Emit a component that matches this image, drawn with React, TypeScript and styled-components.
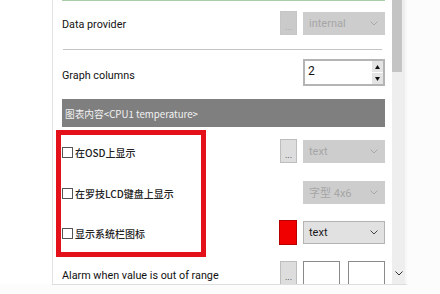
import React from "react";
import styled, { createGlobalStyle } from "styled-components";

const Global = createGlobalStyle`
  html, body { margin: 0; padding: 0; background: #ffffff; }
  body { font-family: "Roboto", "Noto Sans CJK SC", sans-serif; color: #1b1b1b; }
`;

const Page = styled.div`
  display: flex;
  width: 440px;
  height: 294px;
  background: #fcfcfc;
  align-items: flex-start;
`;

const Gutter = styled.div`
  width: 52px;
  height: 284px;
  background: #ffffff;
`;

const Window = styled.div`
  display: flex;
  height: 284px;
  border-bottom: 1px solid #dedede;
  background: #ffffff;
`;

const Panel = styled.div`
  position: relative;
  width: 323px;
  height: 284px;
  overflow: hidden;
  border-left: 1px solid #e2e2e2;
  padding: 0 7px 0 9px;
  display: flex;
  flex-direction: column;
`;

const TopBox = styled.div`
  height: 3px;
  border: 1px solid #a9cda9;
  border-top: none;
  background: #f3f6f3;
`;

const Row = styled.div<{ $mt: number; $h?: number }>`
  display: flex;
  align-items: center;
  margin-top: ${(p) => p.$mt}px;
  height: ${(p) => p.$h ?? 24}px;
  flex-shrink: 0;
`;

const Label = styled.div<{ $pt?: number }>`
  flex: 1;
  font-family: "Roboto", sans-serif;
  font-size: 10.8px;
  color: #111;
  padding-top: ${(p) => p.$pt ?? 2}px;
`;

const CheckLabel = styled.label`
  flex: 1;
  display: flex;
  align-items: center;
  font-family: "Noto Sans CJK SC", sans-serif;
  font-size: 10px;
  font-weight: 500;
  color: #222;
  padding-top: 3px;
`;

const Box = styled.span`
  width: 9px;
  height: 9px;
  border: 1px solid #555;
  background: #fff;
  margin-right: 2px;
`;

const Dots = styled.div<{ $disabled?: boolean }>`
  width: 15px;
  height: 22px;
  margin-right: 6px;
  border: 1px solid ${(p) => (p.$disabled ? "#c6c6c6" : "#bdbdbd")};
  background: ${(p) => (p.$disabled ? "#cacaca" : "#dddddd")};
  color: ${(p) => (p.$disabled ? "#a4a4a4" : "#333")};
  font-size: 9px;
  display: flex;
  align-items: flex-end;
  justify-content: center;
  line-height: 14px;
  box-sizing: content-box;
`;

const Swatch = styled.div`
  width: 16px;
  height: 23px;
  margin-right: 6px;
  background: #f10000;
  border: 1px solid #b40000;
`;

const Select = styled.div<{ $disabled?: boolean }>`
  width: 82px;
  height: 23px;
  box-sizing: border-box;
  display: flex;
  align-items: center;
  justify-content: space-between;
  padding: 0 6px 0 5px;
  background: ${(p) => (p.$disabled ? "#cdcdcd" : "#e1e1e1")};
  border: 1px solid ${(p) => (p.$disabled ? "#cdcdcd" : "#b3b3b3")};
  color: ${(p) => (p.$disabled ? "#a6a6a6" : "#1a1a1a")};
  font-family: "Roboto", "Noto Sans CJK SC", sans-serif;
  font-size: 11px;
`;

const Spin = styled.div`
  width: 82px;
  height: 27px;
  box-sizing: border-box;
  display: flex;
  border: 2px solid #b4b4b4;
  background: #fff;
`;

const SpinValue = styled.div`
  flex: 1;
  font-size: 12px;
  padding: 3px 0 0 3px;
  color: #111;
`;

const SpinButtons = styled.div`
  width: 11px;
  display: flex;
  flex-direction: column;
  gap: 1px;
  background: #fff;
`;

const SpinBtn = styled.div`
  flex: 1;
  background: #e4e4e4;
  display: flex;
  align-items: center;
  justify-content: center;
`;

const Separator = styled.div<{ $mt: number }>`
  margin: ${(p) => p.$mt}px 3px 0 1px;
  height: 1px;
  background: #c4c4c4;
  flex-shrink: 0;
`;

const SectionHeader = styled.div<{ $mt: number }>`
  margin-top: ${(p) => p.$mt}px;
  height: 28px;
  flex-shrink: 0;
  background: #7f7f7f;
  color: #f2f2f2;
  font-family: "Noto Sans CJK SC", sans-serif;
  font-size: 9.7px;
  display: flex;
  align-items: center;
  padding-left: 3px;
  padding-top: 2px;
  box-sizing: border-box;
`;

const Field = styled.div`
  width: 37px;
  height: 24px;
  box-sizing: border-box;
  border: 1px solid #8a8a8a;
  background: #fff;
`;

const FieldPair = styled.div`
  display: flex;
  gap: 8px;
  align-self: flex-start;
`;

const RedFrame = styled.div`
  position: absolute;
  left: 3px;
  top: 130px;
  width: 140px;
  height: 117px;
  border: 5px solid #e4101a;
`;

const Scrollbar = styled.div`
  width: 13px;
  height: 284px;
  background: #eeeeee;
  border-right: 2px solid #f7f7f7;
  display: flex;
  flex-direction: column;
  justify-content: space-between;
`;

const Thumb = styled.div`
  width: 10px;
  height: 72px;
  background: #c4c4c4;
`;

const ArrowDown = styled.div`
  height: 13px;
  display: flex;
  justify-content: center;
  align-items: flex-start;
  padding-left: 1px;
`;

const Chevron = ({ color }: { color: string }) => (
  <svg width="8" height="5" viewBox="0 0 8 5">
    <polyline points="0.5,0.5 4,4 7.5,0.5" fill="none" stroke={color} strokeWidth="1" />
  </svg>
);

const Tri = ({ up }: { up?: boolean }) => (
  <svg width="5" height="4" viewBox="0 0 5 4">
    <polygon points={up ? "2.5,0 5,4 0,4" : "0,0 5,0 2.5,4"} fill="#111" />
  </svg>
);

export default function App() {
  return (
    <>
      <Global />
      <Page>
        <Gutter />
        <Window>
          <Panel>
            <TopBox />
            <Row $mt={10}>
              <Label>Data provider</Label>
              <Dots $disabled>...</Dots>
              <Select $disabled>
                internal
                <Chevron color="#a8a8a8" />
              </Select>
            </Row>
            <Separator $mt={14} />
            <Row $mt={9} $h={27}>
              <Label $pt={5}>Graph columns</Label>
              <Spin>
                <SpinValue>2</SpinValue>
                <SpinButtons>
                  <SpinBtn>
                    <Tri up />
                  </SpinBtn>
                  <SpinBtn>
                    <Tri />
                  </SpinBtn>
                </SpinButtons>
              </Spin>
            </Row>
            <SectionHeader $mt={13}>图表内容&lt;CPU1 temperature&gt;</SectionHeader>
            <Row $mt={12}>
              <CheckLabel>
                <Box />
                在OSD上显示
              </CheckLabel>
              <Dots>...</Dots>
              <Select $disabled>
                text
                <Chevron color="#a8a8a8" />
              </Select>
            </Row>
            <Row $mt={17}>
              <CheckLabel>
                <Box />
                在罗技LCD键盘上显示
              </CheckLabel>
              <Select $disabled>
                字型 4x6
                <Chevron color="#a8a8a8" />
              </Select>
            </Row>
            <Row $mt={16}>
              <CheckLabel>
                <Box />
                显示系统栏图标
              </CheckLabel>
              <Swatch />
              <Select>
                text
                <Chevron color="#444" />
              </Select>
            </Row>
            <Row $mt={17}>
              <Label $pt={4}>Alarm when value is out of range</Label>
              <Dots>...</Dots>
              <FieldPair>
                <Field />
                <Field />
              </FieldPair>
            </Row>
            <RedFrame />
          </Panel>
          <Scrollbar>
            <Thumb />
            <ArrowDown>
              <Chevron color="#333" />
            </ArrowDown>
          </Scrollbar>
        </Window>
      </Page>
    </>
  );
}
